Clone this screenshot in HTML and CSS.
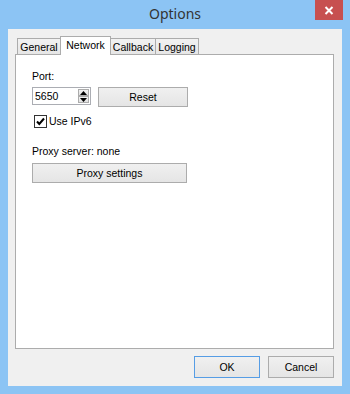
FILE: index.html
```html
<!DOCTYPE html>
<html lang="en">
<head>
    <meta charset="UTF-8">
    <title>Options</title>
    <link rel="stylesheet" href="styles.css">
</head>
<body>
    <div class="window">
        <div class="titlebar">
            <span class="title">Options</span>
            <button class="close" aria-label="Close">
                <svg width="10" height="9" viewBox="0 0 10 9">
                    <path d="M1.5 1 L8.5 8 M8.5 1 L1.5 8" stroke="#fff" stroke-width="2" fill="none"/>
                </svg>
            </button>
        </div>

        <div class="client">
            <!-- Tab strip -->
            <div class="tabs">
                <div class="tab tab-general">General</div>
                <div class="tab tab-network active">Network</div>
                <div class="tab tab-callback">Callback</div>
                <div class="tab tab-logging">Logging</div>
            </div>

            <div class="panel">
                <div class="field-label">Port:</div>
                <div class="port-row">
                    <div class="spin">
                        <span class="spin-value">5650</span>
                        <div class="spin-buttons">
                            <span class="spin-btn">
                                <svg width="7" height="4" viewBox="0 0 7 4"><path d="M0 4 L3.5 0 L7 4 Z" fill="#000"/></svg>
                            </span>
                            <span class="spin-btn">
                                <svg width="7" height="4" viewBox="0 0 7 4"><path d="M0 0 L7 0 L3.5 4 Z" fill="#000"/></svg>
                            </span>
                        </div>
                    </div>
                    <button class="btn reset">Reset</button>
                </div>

                <label class="check">
                    <span class="checkbox">
                        <svg width="11" height="11" viewBox="0 0 11 11">
                            <path d="M2 5.5 L4.3 8 L9 2.5" stroke="#000" stroke-width="2" fill="none"/>
                        </svg>
                    </span>
                    Use IPv6
                </label>

                <div class="proxy-label">Proxy server: none</div>
                <button class="btn proxy">Proxy settings</button>
            </div>

            <div class="actions">
                <button class="btn default">OK</button>
                <button class="btn">Cancel</button>
            </div>
        </div>
    </div>
</body>
</html>
```

FILE: styles.css
```css
:root {
    --frame: #8cc4f4;
    --face: #f0f0f0;
    --edge: #acacac;
    --close: #c75050;
    --focus: #569de5;
}

* {
    margin: 0;
    padding: 0;
    box-sizing: border-box;
}

body {
    margin: 0;
    font-family: 'Liberation Sans', Arial, sans-serif;
    font-size: 10.5px;
    color: #000;
}

.window {
    width: 350px;
    height: 394px;
    background: var(--frame);
    display: flex;
    flex-direction: column;
    padding: 0 8px 8px 8px;
}

.titlebar {
    position: relative;
    height: 29px;
    display: flex;
    align-items: center;
    justify-content: center;
}

.title {
    font-family: 'Noto Sans', 'Open Sans', sans-serif;
    font-size: 14px;
    color: #333;
    margin-top: -3px;
}

.close {
    position: absolute;
    top: 0;
    right: -1px;
    width: 28px;
    height: 20px;
    border: none;
    background: var(--close);
    display: flex;
    align-items: center;
    justify-content: center;
}

.client {
    flex: 1;
    background: var(--face);
    padding: 7px 8px 8px 7px;
    display: flex;
    flex-direction: column;
}

/* Tabs */
.tabs {
    display: flex;
    height: 19px;
    margin-bottom: -1px;
    padding-left: 2px;
    position: relative;
    z-index: 1;
}

.tab {
    height: 16px;
    margin-top: 2px;
    margin-left: -1px;
    border: 1px solid var(--edge);
    border-bottom: none;
    background: linear-gradient(#f2f2f2, #e6e6e6);
    text-align: center;
    line-height: 16px;
}

.tab:first-child {
    margin-left: 0;
}

.tab-general { width: 44px; }
.tab-network { width: 51px; }
.tab-callback { width: 46px; }
.tab-logging { width: 44px; }

.tab.active {
    height: 19px;
    margin-top: 0;
    background: #fff;
    line-height: 16px;
    position: relative;
    z-index: 2;
}

.panel {
    flex: 1;
    background: #fff;
    border: 1px solid var(--edge);
    padding: 15px 16px 0 16px;
}

.field-label {
    line-height: 13px;
}

.port-row {
    display: flex;
    align-items: flex-start;
    gap: 7px;
    margin-top: 4px;
}

.spin {
    width: 59px;
    height: 18px;
    border: 1px solid #abadb3;
    display: flex;
    align-items: center;
    justify-content: space-between;
    padding: 0 1px 0 2px;
}

.spin-value {
    line-height: 14px;
}

.spin-buttons {
    display: flex;
    flex-direction: column;
}

.spin-btn {
    width: 11px;
    height: 7px;
    border: 1px solid #acacac;
    background: linear-gradient(#f2f2f2, #e2e2e2);
    display: flex;
    align-items: center;
    justify-content: center;
}

.spin-btn svg {
    display: block;
}

.btn {
    font-family: 'Liberation Sans', Arial, sans-serif;
    font-size: 10.5px;
    color: #000;
    border: 1px solid var(--edge);
    background: linear-gradient(#f0f0f0, #e5e5e5);
}

.reset {
    width: 90px;
    height: 20px;
}

.check {
    display: flex;
    align-items: center;
    gap: 2px;
    margin-top: 8px;
    padding-left: 2px;
    line-height: 13px;
}

.checkbox {
    width: 13px;
    height: 13px;
    border: 1px solid #333;
    background: #fff;
    display: flex;
    align-items: center;
    justify-content: center;
}

.proxy-label {
    margin-top: 17px;
    line-height: 13px;
}

.proxy {
    display: block;
    width: 155px;
    height: 20px;
    margin-top: 5px;
}

.actions {
    display: flex;
    justify-content: flex-end;
    gap: 8px;
    margin-top: 7px;
}

.actions .btn {
    width: 66px;
    height: 22px;
}

.btn.default {
    border-color: var(--focus);
}
```
